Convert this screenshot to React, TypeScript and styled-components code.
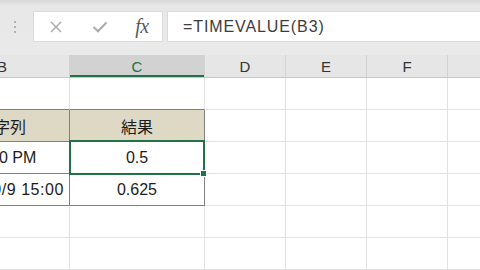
import React from 'react';
import styled, { createGlobalStyle } from 'styled-components';

const Global = createGlobalStyle`
  html, body { margin: 0; padding: 0; }
  body {
    width: 480px;
    height: 270px;
    overflow: hidden;
    background: #ffffff;
    font-family: "Liberation Sans", "Noto Sans CJK JP", Arial, sans-serif;
  }
`;

const Page = styled.div`
  width: 480px;
  height: 270px;
  overflow: hidden;
  display: flex;
  flex-direction: column;
  background: #ffffff;
`;

const Toolbar = styled.div`
  flex: none;
  height: 55px;
  box-sizing: border-box;
  padding-top: 11px;
  display: flex;
  align-items: flex-start;
  background: linear-gradient(#d8d8d8 0px, #e7e7e7 6px, #eaeaea 100%);
`;

const Grip = styled.div`
  width: 33px;
  height: 31px;
  box-sizing: border-box;
  padding-right: 3px;
  display: flex;
  flex-direction: column;
  align-items: center;
  justify-content: center;
  gap: 3px;
`;

const GripDot = styled.span`
  width: 2px;
  height: 2px;
  background: #b2b2b2;
`;

const ActionBox = styled.div`
  width: 130px;
  height: 31px;
  box-sizing: border-box;
  background: #ffffff;
  border: 1px solid #dadada;
  display: grid;
  grid-template-columns: 44px 43px 42px;
  align-items: center;
  justify-items: center;
`;

const FxLabel = styled.span`
  font-family: "Liberation Serif", "DejaVu Serif", serif;
  font-style: italic;
  font-size: 20px;
  color: #595959;
  line-height: 1;
  margin-top: -2px;
  letter-spacing: -0.5px;
`;

const FormulaBox = styled.div`
  flex: 1;
  margin-left: 4px;
  height: 31px;
  box-sizing: border-box;
  background: #ffffff;
  border: 1px solid #dadada;
  border-right: none;
  display: flex;
  align-items: center;
  padding-left: 15px;
  font-size: 16px;
  letter-spacing: 0.9px;
  color: #3c3c3c;
  white-space: nowrap;
`;

const COLS = '135px 135px 81px 81px 81px 81px';

const HeaderRow = styled.div`
  flex: none;
  display: grid;
  grid-template-columns: ${COLS};
  margin-left: -65px;
  height: 23px;
  box-sizing: border-box;
  background: #e6e6e6;
  border-bottom: 1px solid #c8c8c8;
`;

const ColHead = styled.div<{ $active?: boolean }>`
  box-sizing: border-box;
  height: 22px;
  display: flex;
  align-items: center;
  justify-content: center;
  font-size: 15px;
  border-right: 1px solid #d3d3d3;
  color: ${p => (p.$active ? '#217346' : '#333333')};
  background: ${p => (p.$active ? '#d2d2d2' : 'transparent')};
  box-shadow: ${p => (p.$active ? 'inset 0 -2px 0 #217346' : 'none')};
`;

const Sheet = styled.div`
  display: grid;
  grid-template-columns: ${COLS};
  grid-auto-rows: 32px;
  margin-left: -65px;
`;

const Cell = styled.div<{ $head?: boolean; $boxRight?: boolean; $boxBottom?: boolean; $spaced?: boolean }>`
  position: relative;
  box-sizing: border-box;
  height: 32px;
  display: flex;
  align-items: center;
  justify-content: center;
  white-space: nowrap;
  font-size: 16px;
  color: #1c1c1c;
  letter-spacing: ${p => (p.$spaced ? '0.55px' : '0')};
  background: ${p => (p.$head ? '#ddd9c4' : '#ffffff')};
  border-right: 1px solid ${p => (p.$boxRight ? '#808080' : '#e2e2e2')};
  border-bottom: 1px solid ${p => (p.$boxBottom ? '#808080' : '#e2e2e2')};
`;

const Selection = styled.div`
  position: absolute;
  left: -1px;
  top: -2px;
  right: -1px;
  bottom: -2px;
  border: 2px solid #217346;
  pointer-events: none;
  z-index: 2;
`;

const FillHandle = styled.div`
  position: absolute;
  right: -4px;
  bottom: -4px;
  width: 5px;
  height: 5px;
  background: #217346;
  border: 1px solid #ffffff;
`;

const CloseIcon = () => (
  <svg width="14" height="14" viewBox="0 0 14 14">
    <path d="M2 2 L12 12 M12 2 L2 12" stroke="#a6a6a6" strokeWidth="1.4" fill="none" />
  </svg>
);

const CheckIcon = () => (
  <svg width="16" height="12" viewBox="0 0 16 12">
    <path d="M1.5 6 L6 10.3 L14.5 1.5" stroke="#acacac" strokeWidth="2.2" fill="none" />
  </svg>
);

type CellData = {
  text?: string;
  head?: boolean;
  boxRight?: boolean;
  boxBottom?: boolean;
  spaced?: boolean;
  selected?: boolean;
};

const rows: CellData[][] = [
  [{ boxBottom: true }, { boxBottom: true }, {}, {}, {}, {}],
  [
    { text: '文字列', head: true, boxRight: true, boxBottom: true },
    { text: '結果', head: true, boxRight: true, boxBottom: true },
    {}, {}, {}, {},
  ],
  [
    { text: '12:00 PM', boxRight: true, boxBottom: true },
    { text: '0.5', boxRight: true, boxBottom: true, selected: true },
    {}, {}, {}, {},
  ],
  [
    { text: '2020/10/9 15:00', boxRight: true, boxBottom: true, spaced: true },
    { text: '0.625', boxRight: true, boxBottom: true },
    {}, {}, {}, {},
  ],
  [{}, {}, {}, {}, {}, {}],
  [{}, {}, {}, {}, {}, {}],
];

const columns = ['B', 'C', 'D', 'E', 'F', 'G'];

export default function App() {
  return (
    <Page>
      <Global />
      <Toolbar>
        <Grip>
          <GripDot />
          <GripDot />
          <GripDot />
        </Grip>
        <ActionBox>
          <CloseIcon />
          <CheckIcon />
          <FxLabel>fx</FxLabel>
        </ActionBox>
        <FormulaBox>=TIMEVALUE(B3)</FormulaBox>
      </Toolbar>
      <HeaderRow>
        {columns.map(c => (
          <ColHead key={c} $active={c === 'C'}>
            {c === 'G' ? '' : c}
          </ColHead>
        ))}
      </HeaderRow>
      <Sheet>
        {rows.map((row, r) =>
          row.map((cell, c) => (
            <Cell
              key={`${r}-${c}`}
              $head={cell.head}
              $boxRight={cell.boxRight}
              $boxBottom={cell.boxBottom}
              $spaced={cell.spaced}
            >
              {cell.text}
              {cell.selected && (
                <Selection>
                  <FillHandle />
                </Selection>
              )}
            </Cell>
          ))
        )}
      </Sheet>
    </Page>
  );
}
